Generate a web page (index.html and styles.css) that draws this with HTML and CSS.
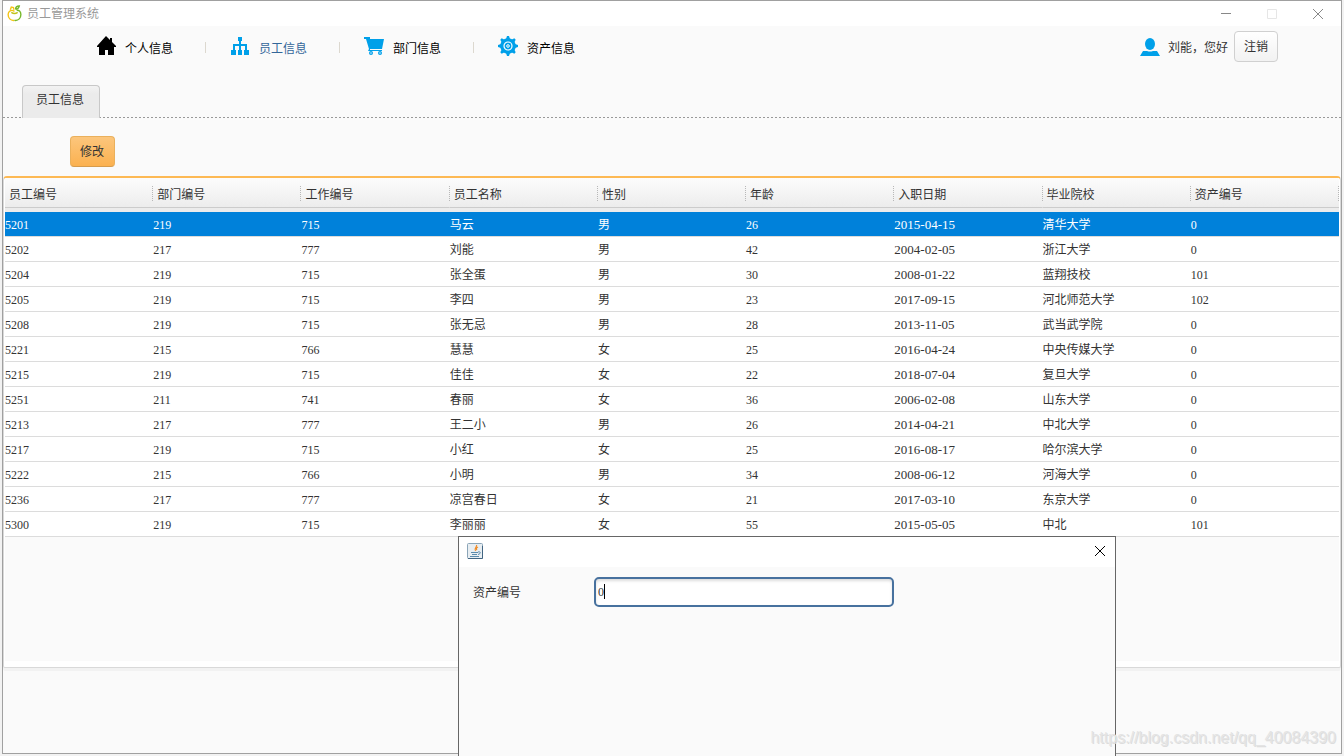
FILE: index.html
```html
<!DOCTYPE html>
<html lang="zh-CN">
<head>
<meta charset="utf-8">
<title>员工管理系统</title>
<link rel="stylesheet" href="styles.css">
</head>
<body>
<div class="window">
  <header class="titlebar">
    <svg class="app-icon" viewBox="0 0 14 16" fill="none" stroke-width="1.300"><path d="M7 6C4 4 1 5.500 1 9c0 3 2 6 6 5.500" stroke="#f4c414"/><path d="M7 14.500c4 .5 6-2.500 6-5.500 0-3-2-4.500-4-4" stroke="#76b82a"/><path d="M4 7q3 2 6 0" stroke="#c0c41c"/><path d="M3 4.500L4 2l2 .5.500 2" stroke="#f4c414"/><path d="M8 4c0-2 1-3 3.500-3-.5 2-1.500 3-3.500 3" stroke="#76b82a"/></svg>
    <h1 class="title">员工管理系统</h1>
    <button class="win-btn" aria-label="最小化"><svg viewBox="0 0 12 12"><path d="M1 5.500h10"/></svg></button>
    <button class="win-btn win-btn--off" aria-label="最大化" disabled><svg viewBox="0 0 12 12"><path d="M1.500 1.500h9v9h-9z"/></svg></button>
    <button class="win-btn" aria-label="关闭"><svg viewBox="0 0 12 12"><path d="M1 1l10 10M11 1L1 11"/></svg></button>
  </header>

  <div class="toolbar">
    <nav class="nav">
      <a class="nav-item" href="#"><svg viewBox="0 0 20 20" fill="#000"><path d="M10 0L14 4V2h2v4l4 4v1h-2v8h-6v-5H9v5H3v-8H1v-1z"/></svg><span>个人信息</span></a>
      <a class="nav-item nav-item--active" href="#"><svg viewBox="0 0 20 20" fill="#00a0e9"><path d="M8 1h4v4h-1v3h6v6h2v5h-5v-5h1v-4h-4v4h1v5H8v-5h1v-4H5v4h1v5H1v-5h2V8h6V5H8z"/></svg><span>员工信息</span></a>
      <a class="nav-item" href="#"><svg viewBox="0 0 20 20" fill="#00a0e9"><path d="M0 1h6v2h14l-2 10H6v1h12v1H4l1-2L2 3H0z"/><circle cx="7" cy="17" r="2"/><circle cx="16" cy="17" r="2"/><circle cx="7" cy="17" r=".7" fill="#fff"/><circle cx="16" cy="17" r=".7" fill="#fff"/></svg><span>部门信息</span></a>
      <a class="nav-item" href="#"><svg viewBox="0 0 20 20" fill="#00a0e9"><circle cx="10" cy="10" r="7.800"/><path d="M9 0h2l1 3H8zM9 20h2l1-3H8zM0 9v2l3 1V8zM20 9v2l-3 1V8zM2.300 3.700l1.400-1.400L7 4 4 7zM16.300 2.300l1.400 1.400L16 7l-3-3zM2.300 16.300l1.400 1.400L7 16l-3-3zM16.300 17.700l1.400-1.400L16 13l-3 3z"/><circle cx="10" cy="10" r="4" fill="none" stroke="#fff" stroke-width="1.200"/><circle cx="10" cy="10" r="1.300" fill="none" stroke="#fff"/></svg><span>资产信息</span></a>
    </nav>
    <div class="account">
      <svg viewBox="0 0 20 20" fill="#00a0e9"><ellipse cx="10" cy="7" rx="5" ry="6"/><path d="M3 14h4q3 1 6 0h4l3 5H0z"/></svg>
      <span>刘能，您好</span>
      <button class="btn">注销</button>
    </div>
  </div>

  <div class="tabs"><button class="tab">员工信息</button></div>
  <div class="actions"><button class="btn btn--primary">修改</button></div>

  <section class="panel">
    <table class="grid">
      <thead><tr><th>员工编号</th><th>部门编号</th><th>工作编号</th><th>员工名称</th><th>性别</th><th>年龄</th><th>入职日期</th><th>毕业院校</th><th>资产编号</th></tr></thead>
      <tbody>
        <tr class="selected"><td>5201</td><td>219</td><td>715</td><td>马云</td><td>男</td><td>26</td><td class="date">2015-04-15</td><td>清华大学</td><td>0</td></tr>
        <tr><td>5202</td><td>217</td><td>777</td><td>刘能</td><td>男</td><td>42</td><td class="date">2004-02-05</td><td>浙江大学</td><td>0</td></tr>
        <tr><td>5204</td><td>219</td><td>715</td><td>张全蛋</td><td>男</td><td>30</td><td class="date">2008-01-22</td><td>蓝翔技校</td><td>101</td></tr>
        <tr><td>5205</td><td>219</td><td>715</td><td>李四</td><td>男</td><td>23</td><td class="date">2017-09-15</td><td>河北师范大学</td><td>102</td></tr>
        <tr><td>5208</td><td>219</td><td>715</td><td>张无忌</td><td>男</td><td>28</td><td class="date">2013-11-05</td><td>武当武学院</td><td>0</td></tr>
        <tr><td>5221</td><td>215</td><td>766</td><td>慧慧</td><td>女</td><td>25</td><td class="date">2016-04-24</td><td>中央传媒大学</td><td>0</td></tr>
        <tr><td>5215</td><td>219</td><td>715</td><td>佳佳</td><td>女</td><td>22</td><td class="date">2018-07-04</td><td>复旦大学</td><td>0</td></tr>
        <tr><td>5251</td><td>211</td><td>741</td><td>春丽</td><td>女</td><td>36</td><td class="date">2006-02-08</td><td>山东大学</td><td>0</td></tr>
        <tr><td>5213</td><td>217</td><td>777</td><td>王二小</td><td>男</td><td>26</td><td class="date">2014-04-21</td><td>中北大学</td><td>0</td></tr>
        <tr><td>5217</td><td>219</td><td>715</td><td>小红</td><td>女</td><td>25</td><td class="date">2016-08-17</td><td>哈尔滨大学</td><td>0</td></tr>
        <tr><td>5222</td><td>215</td><td>766</td><td>小明</td><td>男</td><td>34</td><td class="date">2008-06-12</td><td>河海大学</td><td>0</td></tr>
        <tr><td>5236</td><td>217</td><td>777</td><td>凉宫春日</td><td>女</td><td>21</td><td class="date">2017-03-10</td><td>东京大学</td><td>0</td></tr>
        <tr><td>5300</td><td>219</td><td>715</td><td>李丽丽</td><td>女</td><td>55</td><td class="date">2015-05-05</td><td>中北</td><td>101</td></tr>
      </tbody>
    </table>
    <div class="panel-space"></div>
  </section>
</div>

<div class="dialog" role="dialog" aria-label="资产编号">
  <div class="dialog-bar">
    <svg class="java-icon" viewBox="0 0 16 16" fill="none"><rect x=".5" y=".5" width="15" height="15" rx="1" fill="#e8eef2" stroke="#8ba5b8"/><path d="M1 15.500h14.500V3" stroke="#426582"/><path d="M9.500 2c1 2-3 3-1 6M11 4c-2 1-2 2-1 3" stroke="#f08a24" stroke-width="1.200"/><path d="M4 9.500h7M5 11.500h5M3 13.500h9M11 9c3-1 3 2 0 2.500" stroke="#5c8bab"/></svg>
    <button class="dialog-close" aria-label="关闭"><svg viewBox="0 0 12 12"><path d="M1 1l10 10M11 1L1 11"/></svg></button>
  </div>
  <div class="dialog-form">
    <label for="asset">资产编号</label>
    <div class="field"><input id="asset" type="text" value="0"><span class="caret"></span></div>
  </div>
</div>
<div class="watermark">https://blog.csdn.net/qq_40084390</div>
</body>
</html>
```
FILE: styles.css
```css
* { box-sizing: border-box; }
body {
  margin: 0;
  height: 100vh;
  overflow: hidden;
  background: #f2f2f2;
  color: #333;
  font: 12px/18px "Liberation Serif", "Noto Sans CJK SC", sans-serif;
}
button, input { font: inherit; color: inherit; margin: 0; }
a { color: inherit; text-decoration: none; }
svg { display: block; flex: none; }

.window {
  height: calc(100vh - 2px);
  margin: 0 2px;
  border: 1px solid #a0a0a0;
  background: #fafafa;
}
.titlebar {
  display: flex;
  align-items: center;
  height: 25px;
  padding-left: 4px;
  background: #fff;
  color: #999;
}
.app-icon { width: 15px; height: 17px; }
.title { flex: 1; margin: 0 0 0 5px; font-size: 12px; font-weight: 400; }
.win-btn {
  display: grid;
  place-items: center;
  width: 46px;
  height: 24px;
  padding: 0;
  border: 0;
  background: none;
}
.win-btn svg, .dialog-close svg { width: 12px; height: 12px; fill: none; stroke: #888; }
.win-btn--off svg { stroke: #e6e6e6; }

.toolbar {
  display: flex;
  justify-content: space-between;
  height: 59px;
  padding: 5px 63px 0 93px;
}
.nav { display: flex; color: #000; }
.nav-item { display: flex; gap: 9px; width: 134px; height: 30px; }
.nav-item svg { width: 20px; height: 20px; margin-top: 5px; }
.nav-item span { padding-top: 9px; }
.nav-item:not(:last-child)::after {
  content: "";
  width: 1px;
  height: 11px;
  margin: 11px 0 0 23px;
  background: #dcd8cf;
}
.nav-item--active { color: #336699; }
.account { display: flex; align-items: center; height: 31px; }
.account svg { width: 20px; height: 20px; margin-right: 8px; }
.account span { padding-top: 2px; margin-right: 6px; }
.btn {
  height: 31px;
  padding: 1px 9px 0;
  border: 1px solid #d0d0d0;
  border-radius: 4px;
  background: linear-gradient(#fff, #f2f2f2);
}
.btn--primary {
  padding: 1px 10px 0 9px;
  border-color: #eab05c #eab05c #d69b4c;
  background: linear-gradient(#fcc67c, #fbb150);
}

.tabs {
  height: 33px;
  padding-left: 19px;
  background: repeating-linear-gradient(90deg, #999 0 2px, transparent 2px 4px) bottom / 100% 1px no-repeat;
}
.tab {
  height: 33px;
  padding: 0 15px 4px 13px;
  border: 1px solid #c8c8c8;
  border-bottom: 0;
  border-radius: 4px 4px 0 0;
  background: linear-gradient(#f3f3f3, #ebebeb 8px);
}
.actions { padding: 18px 0 9px 67px; }
.actions .btn { display: block; }

.panel {
  padding: 0 1px 6px;
  border: 1px solid #d9d9d9;
  border-top: 2px solid #fdb954;
  border-radius: 4px 4px 2px 2px;
  background: #fff;
  box-shadow: 0 3px 0 #f2f2f2;
}
.grid { width: 100%; table-layout: fixed; border-collapse: separate; border-spacing: 0; }
.grid th {
  height: 34px;
  padding: 3px 4px 0;
  border-bottom: 4px solid #ececec;
  font-weight: 400;
  text-align: left;
  background:
    repeating-linear-gradient(#b8b8b8 0 1px, transparent 1px 2px) right 8px / 1px 16px no-repeat,
    linear-gradient(#ccc, #ccc) bottom / 100% 1px no-repeat,
    linear-gradient(#fcfcfc, #ececec);
  background-clip: padding-box;
}
.grid td { height: 25px; padding: 2px 0 0; border-bottom: 1px solid #dcdcdc; background: #fff; }
.grid .selected td { background: #0081da; color: #fff; }
.grid .date { font-size: 13px; }
.panel-space { height: 124px; background: #fafafa; }

.dialog {
  position: absolute;
  left: 458px;
  top: 536px;
  width: 658px;
  height: 230px;
  border: 1px solid #666;
  background: #fafafa;
}
.dialog-bar {
  display: flex;
  justify-content: space-between;
  align-items: center;
  height: 30px;
  padding: 0 9px 2px 8px;
  background: #fff;
}
.java-icon { width: 16px; height: 16px; }
.dialog-close { padding: 0; border: 0; background: none; }
.dialog-close svg { stroke: #000; }
.dialog-form { display: flex; align-items: center; gap: 73px; padding: 10px 14px; }
.dialog-form label { padding-top: 2px; }
.field { position: relative; width: 300px; }
.field input {
  display: block;
  width: 100%;
  height: 30px;
  padding: 0 2px;
  border: 2px solid #47719e;
  border-radius: 5px;
  outline: 0;
  background: #fff;
  box-shadow: inset 0 2px 3px #ddd;
}
.caret { position: absolute; left: 10px; top: 7px; width: 1px; height: 15px; background: #000; }
.watermark {
  position: absolute;
  right: 8px;
  bottom: 8px;
  color: #e4e4e4;
  font: 16px/20px "Liberation Sans", sans-serif;
  text-shadow: 1px 1px 0 #ddd;
}
```
